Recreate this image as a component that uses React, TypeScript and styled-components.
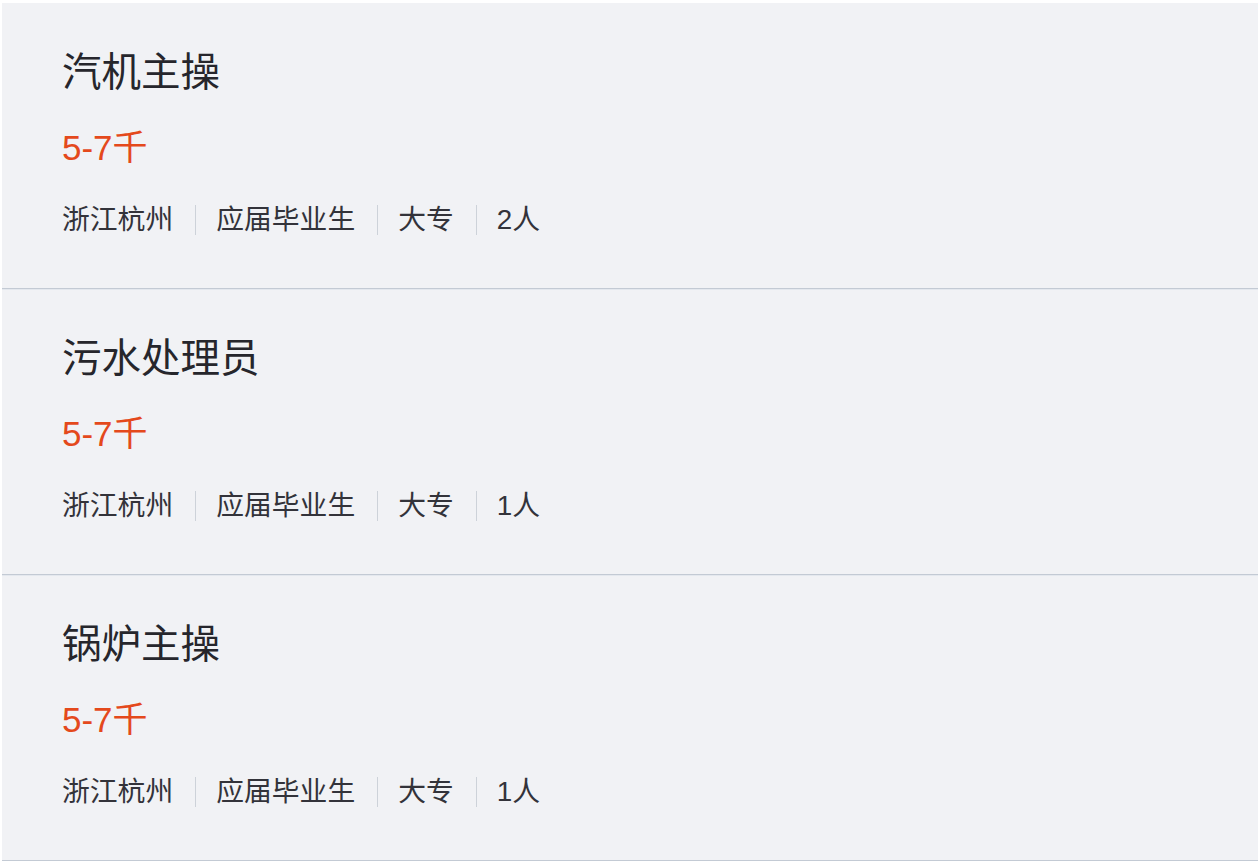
import React from "react";
import styled, { createGlobalStyle } from "styled-components";

const Global = createGlobalStyle`
  html, body { margin: 0; padding: 0; background: #ffffff; }
  body { font-family: "Liberation Sans", "Noto Sans CJK SC", sans-serif; }
`;

const List = styled.div`
  margin: 3px 0 0 2px;
  background: #f1f2f5;
  display: flex;
  flex-direction: column;
`;

const Row = styled.div`
  box-sizing: border-box;
  height: 286px;
  padding: 45px 0 0 60px;
  border-bottom: 1px solid #c3cad4;
  box-shadow: 0 1px 0 #e4e8ee;
  display: flex;
  flex-direction: column;
`;

const Title = styled.div`
  font-size: 39.5px;
  line-height: 48px;
  color: #26262c;
  font-family: "Liberation Sans", "Noto Sans CJK SC", sans-serif;
`;

const Salary = styled.div`
  margin-top: 28px;
  font-size: 35px;
  line-height: 48px;
  color: #e4491c;
  font-family: "Liberation Sans", "Noto Sans CJK SC", sans-serif;
`;

const Meta = styled.div`
  margin-top: 28px;
  display: flex;
  align-items: center;
  height: 40px;
  font-size: 27.8px;
  color: #33333a;
`;

const Item = styled.span<{ $first?: boolean }>`
  display: flex;
  align-items: center;
  line-height: 40px;
  &::before {
    content: "";
    display: ${(p) => (p.$first ? "none" : "block")};
    width: 1px;
    height: 30px;
    background: #cdd2d9;
    margin: 0 20px 0 22px;
  }
`;

const jobs = [
  { title: "汽机主操", salary: "5-7千", count: "2人" },
  { title: "污水处理员", salary: "5-7千", count: "1人" },
  { title: "锅炉主操", salary: "5-7千", count: "1人" },
];

export default function App() {
  return (
    <>
      <Global />
      <List>
        {jobs.map((j) => (
          <Row key={j.title}>
            <Title>{j.title}</Title>
            <Salary>{j.salary}</Salary>
            <Meta>
              <Item $first>浙江杭州</Item>
              <Item>应届毕业生</Item>
              <Item>大专</Item>
              <Item>{j.count}</Item>
            </Meta>
          </Row>
        ))}
      </List>
    </>
  );
}
